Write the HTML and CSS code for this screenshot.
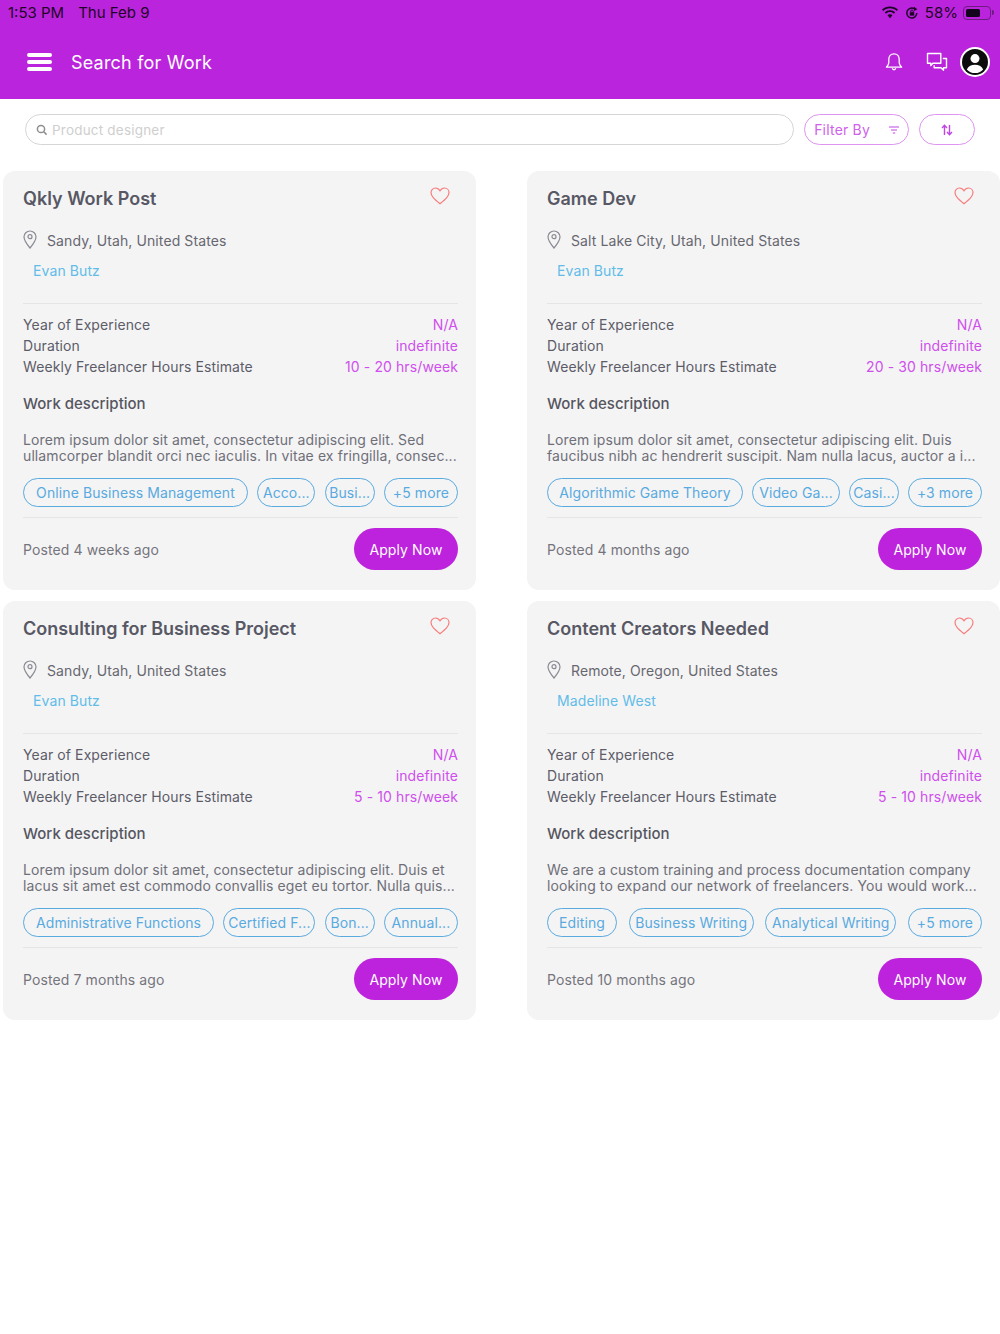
FILE: index.html
```html
<!DOCTYPE html>
<html lang="en">
<head>
<meta charset="utf-8">
<title>Search for Work</title>
<link rel="stylesheet" href="styles.css">
</head>
<body>
<header class="appbar">
  <div class="status">
    <div class="status-left"><span>1:53 PM</span><span>Thu Feb 9</span></div>
    <div class="status-right">
      <svg class="st-wifi" viewBox="0 0 18 13"><path d="M9 2.2c2.6 0 5 1 6.8 2.7l1.2-1.3C14.900 1.600 12.100.4 9 .4S3.100 1.600 1 3.600l1.200 1.300C4 3.200 6.400 2.200 9 2.200z"/><path d="M9 6.100c1.500 0 2.900.6 4 1.600l1.200-1.300C12.800 5.100 11 4.300 9 4.300s-3.800.8-5.200 2.100L5 7.700c1.100-1 2.500-1.600 4-1.600z"/><path d="M9 8.200c-1 0-1.800.4-2.500 1L9 12.300l2.500-3.100c-.7-.6-1.500-1-2.500-1z"/></svg>
      <svg class="st-lock" viewBox="0 0 14 14"><path d="M11.800 7A5 5 0 1 1 9.800 3" fill="none" stroke="#1d0426" stroke-width="1.500"/><path d="M9 .8l3.400 2.400L9 5z" fill="#1d0426"/><rect x="4.800" y="6.200" width="4.400" height="3.400" fill="#1d0426"/><path d="M5.800 6.500V5.200a1.200 1.200 0 0 1 2.400 0v1.300" fill="none" stroke="#1d0426"/></svg>
      <span class="st-pct">58%</span>
      <div class="battery"><div class="battery-fill"></div></div>
      <div class="battery-cap"></div>
    </div>
  </div>
  <div class="toolbar">
    <div class="burger"><i></i><i></i><i></i></div>
    <h1 class="page-title">Search for Work</h1>
    <svg class="bar-icon bell" viewBox="0 0 20 20"><path d="M10 1.800c-3.300 0-5.200 2.500-5.200 5.600v3.300c0 1.700-1.100 3.100-2.400 4.500h15.200c-1.300-1.400-2.400-2.800-2.400-4.500V7.400c0-3.100-1.900-5.600-5.200-5.600z" fill="none" stroke="#fff" stroke-width="1.300" stroke-linejoin="round"/><path d="M8.300 16.200c.2 1 .8 1.600 1.700 1.600s1.500-.6 1.700-1.600" fill="none" stroke="#fff" stroke-width="1.300"/></svg>
    <svg class="bar-icon chat" viewBox="0 0 22 20"><path d="M1.500 1.500h13.300v9.700H6.800l-2 2.400v-2.400H1.500z" fill="none" stroke="#fff" stroke-width="1.400" stroke-linejoin="round"/><path d="M16.800 6.500h3.700v9.300h-3v2.400l-2.500-2.400H8.200v-2.600" fill="none" stroke="#fff" stroke-width="1.400" stroke-linejoin="round"/></svg>
    <div class="avatar"><svg viewBox="0 0 26 26"><circle cx="13" cy="13" r="13" fill="#0c0c0c"/><circle cx="13" cy="9.600" r="4.500" fill="#fff"/><path d="M4.800 20.400c1.600-3.300 4.700-4.700 8.200-4.700s6.600 1.400 8.200 4.700a11 11 0 0 1-16.400 0z" fill="#fff"/></svg></div>
  </div>
</header>

<div class="searchrow">
  <div class="search">
    <svg class="search-icon" viewBox="0 0 12 12"><circle cx="5" cy="5" r="3.600" fill="none" stroke="#8d8d8d" stroke-width="1.500"/><path d="M7.800 7.800l2.800 2.800" stroke="#8d8d8d" stroke-width="1.500"/></svg>
    <span class="search-ph">Product designer</span>
  </div>
  <div class="filter">
    <span>Filter By</span>
    <svg class="filter-icon" viewBox="0 0 10 8"><path d="M0 1h10M2 4h6M3.800 7h2.400" stroke="#c046e4" stroke-width="1"/></svg>
  </div>
  <div class="sort">
    <svg viewBox="0 0 12 12"><path d="M3.500 11V1.500M1 4l2.500-2.700L6 4" fill="none" stroke="#c046e4" stroke-width="1.400"/><path d="M8.500 1v9.500M6 8l2.500 2.700L11 8" fill="none" stroke="#c046e4" stroke-width="1.400"/></svg>
  </div>
</div>

<main class="cards">

  <article class="card">
    <div class="card-head"><h2 class="card-title">Qkly Work Post</h2>
      <svg class="heart" viewBox="0 0 20 18"><path d="M10 16.800C4.500 12.300 1 9.400 1 5.600 1 3 3 1 5.400 1 7.200 1 9 2.100 10 3.800 11 2.100 12.800 1 14.600 1 17 1 19 3 19 5.600c0 3.800-3.500 6.700-9 11.200z" fill="none" stroke="#f87b7b" stroke-width="1.200"/></svg></div>
    <div class="loc"><svg class="pin" viewBox="0 0 14 19"><path d="M7 1C3.700 1 1 3.600 1 6.800 1 11 7 18 7 18s6-7 6-11.200C13 3.600 10.300 1 7 1z" fill="none" stroke="#8a8a92" stroke-width="1.200"/><circle cx="7" cy="6.700" r="2" fill="none" stroke="#8a8a92" stroke-width="1.200"/></svg><span>Sandy, Utah, United States</span></div>
    <div class="author">Evan Butz</div>
    <div class="facts">
      <div class="fact"><span>Year of Experience</span><span class="val">N/A</span></div>
      <div class="fact"><span>Duration</span><span class="val">indefinite</span></div>
      <div class="fact"><span>Weekly Freelancer Hours Estimate</span><span class="val">10 - 20 hrs/week</span></div>
    </div>
    <h3 class="desc-title">Work description</h3>
    <p class="desc"><span>Lorem ipsum dolor sit amet, consectetur adipiscing elit. Sed</span><span>ullamcorper blandit orci nec iaculis. In vitae ex fringilla, consec...</span></p>
    <div class="tags tags-a"><span class="tag">Online Business Management</span><span class="tag">Acco...</span><span class="tag">Busi...</span><span class="tag">+5 more</span></div>
    <div class="foot"><span class="posted">Posted 4 weeks ago</span><span class="apply">Apply Now</span></div>
  </article>

  <article class="card">
    <div class="card-head"><h2 class="card-title">Game Dev</h2>
      <svg class="heart" viewBox="0 0 20 18"><path d="M10 16.800C4.500 12.300 1 9.400 1 5.600 1 3 3 1 5.400 1 7.200 1 9 2.100 10 3.800 11 2.100 12.800 1 14.600 1 17 1 19 3 19 5.600c0 3.800-3.500 6.700-9 11.200z" fill="none" stroke="#f87b7b" stroke-width="1.200"/></svg></div>
    <div class="loc"><svg class="pin" viewBox="0 0 14 19"><path d="M7 1C3.700 1 1 3.600 1 6.800 1 11 7 18 7 18s6-7 6-11.200C13 3.600 10.300 1 7 1z" fill="none" stroke="#8a8a92" stroke-width="1.200"/><circle cx="7" cy="6.700" r="2" fill="none" stroke="#8a8a92" stroke-width="1.200"/></svg><span>Salt Lake City, Utah, United States</span></div>
    <div class="author">Evan Butz</div>
    <div class="facts">
      <div class="fact"><span>Year of Experience</span><span class="val">N/A</span></div>
      <div class="fact"><span>Duration</span><span class="val">indefinite</span></div>
      <div class="fact"><span>Weekly Freelancer Hours Estimate</span><span class="val">20 - 30 hrs/week</span></div>
    </div>
    <h3 class="desc-title">Work description</h3>
    <p class="desc"><span>Lorem ipsum dolor sit amet, consectetur adipiscing elit. Duis</span><span>faucibus nibh ac hendrerit suscipit. Nam nulla lacus, auctor a i...</span></p>
    <div class="tags tags-b"><span class="tag">Algorithmic Game Theory</span><span class="tag">Video Ga...</span><span class="tag">Casi...</span><span class="tag">+3 more</span></div>
    <div class="foot"><span class="posted">Posted 4 months ago</span><span class="apply">Apply Now</span></div>
  </article>

  <article class="card">
    <div class="card-head"><h2 class="card-title">Consulting for Business Project</h2>
      <svg class="heart" viewBox="0 0 20 18"><path d="M10 16.800C4.500 12.300 1 9.400 1 5.600 1 3 3 1 5.400 1 7.200 1 9 2.100 10 3.800 11 2.100 12.800 1 14.600 1 17 1 19 3 19 5.600c0 3.800-3.500 6.700-9 11.200z" fill="none" stroke="#f87b7b" stroke-width="1.200"/></svg></div>
    <div class="loc"><svg class="pin" viewBox="0 0 14 19"><path d="M7 1C3.700 1 1 3.600 1 6.800 1 11 7 18 7 18s6-7 6-11.200C13 3.600 10.300 1 7 1z" fill="none" stroke="#8a8a92" stroke-width="1.200"/><circle cx="7" cy="6.700" r="2" fill="none" stroke="#8a8a92" stroke-width="1.200"/></svg><span>Sandy, Utah, United States</span></div>
    <div class="author">Evan Butz</div>
    <div class="facts">
      <div class="fact"><span>Year of Experience</span><span class="val">N/A</span></div>
      <div class="fact"><span>Duration</span><span class="val">indefinite</span></div>
      <div class="fact"><span>Weekly Freelancer Hours Estimate</span><span class="val">5 - 10 hrs/week</span></div>
    </div>
    <h3 class="desc-title">Work description</h3>
    <p class="desc"><span>Lorem ipsum dolor sit amet, consectetur adipiscing elit. Duis et</span><span>lacus sit amet est commodo convallis eget eu tortor. Nulla quis...</span></p>
    <div class="tags tags-c"><span class="tag">Administrative Functions</span><span class="tag">Certified F...</span><span class="tag">Bon...</span><span class="tag">Annual...</span></div>
    <div class="foot"><span class="posted">Posted 7 months ago</span><span class="apply">Apply Now</span></div>
  </article>

  <article class="card">
    <div class="card-head"><h2 class="card-title">Content Creators Needed</h2>
      <svg class="heart" viewBox="0 0 20 18"><path d="M10 16.800C4.500 12.300 1 9.400 1 5.600 1 3 3 1 5.400 1 7.200 1 9 2.100 10 3.800 11 2.100 12.800 1 14.600 1 17 1 19 3 19 5.600c0 3.800-3.500 6.700-9 11.200z" fill="none" stroke="#f87b7b" stroke-width="1.200"/></svg></div>
    <div class="loc"><svg class="pin" viewBox="0 0 14 19"><path d="M7 1C3.700 1 1 3.600 1 6.800 1 11 7 18 7 18s6-7 6-11.200C13 3.600 10.300 1 7 1z" fill="none" stroke="#8a8a92" stroke-width="1.200"/><circle cx="7" cy="6.700" r="2" fill="none" stroke="#8a8a92" stroke-width="1.200"/></svg><span>Remote, Oregon, United States</span></div>
    <div class="author">Madeline West</div>
    <div class="facts">
      <div class="fact"><span>Year of Experience</span><span class="val">N/A</span></div>
      <div class="fact"><span>Duration</span><span class="val">indefinite</span></div>
      <div class="fact"><span>Weekly Freelancer Hours Estimate</span><span class="val">5 - 10 hrs/week</span></div>
    </div>
    <h3 class="desc-title">Work description</h3>
    <p class="desc"><span>We are a custom training and process documentation company</span><span>looking to expand our network of freelancers. You would work...</span></p>
    <div class="tags tags-d"><span class="tag">Editing</span><span class="tag">Business Writing</span><span class="tag">Analytical Writing</span><span class="tag">+5 more</span></div>
    <div class="foot"><span class="posted">Posted 10 months ago</span><span class="apply">Apply Now</span></div>
  </article>

</main>
</body>
</html>
```
FILE: styles.css
```css
* { box-sizing: border-box; }
html, body { margin: 0; padding: 0; }
body {
  width: 1000px;
  height: 1334px;
  background: #fff;
  font-family: Inter, "Open Sans", sans-serif;
  color: #5c5c68;
  overflow: hidden;
}
.appbar {
  height: 99px;
  background: #bb24dd;
  display: flex;
  flex-direction: column;
}
.status {
  height: 25px;
  padding: 0 6px 0 8px;
  display: flex;
  justify-content: space-between;
  align-items: center;
  font-family: Inter, sans-serif;
  font-size: 15px;
  color: #1d0426;
}
.status-left { display: flex; gap: 14px; }
.status-right { display: flex; align-items: center; }
.st-wifi { width: 18px; height: 13px; fill: #1d0426; margin-right: 6px; }
.st-lock { width: 14px; height: 14px; margin-right: 6px; }
.st-pct { margin-right: 5px; font-size: 15px; }
.battery {
  width: 28px;
  height: 14px;
  border: 1px solid #6d1a82;
  border-radius: 4px;
  padding: 2px;
}
.battery-fill { width: 14px; height: 100%; background: #14031c; border-radius: 1.500px; }
.battery-cap { width: 2px; height: 5px; background: #6d1a82; margin-left: 1px; border-radius: 0 2px 2px 0; }
.toolbar {
  flex: 1;
  display: flex;
  align-items: center;
  padding: 0 10px 0 27px;
  margin-top: 0;
}
.burger { width: 25px; display: flex; flex-direction: column; gap: 3.500px; margin-right: 19px; }
.burger i { display: block; height: 3.500px; background: #fff; border-radius: 2px; }
.page-title {
  margin: 0;
  font-size: 18px;
  font-weight: 400;
  color: #fff;
  letter-spacing: 0.2px;
  flex: 1;
}
.bar-icon { flex: none; }
.bell { width: 20px; height: 20px; margin-right: 22px; }
.chat { width: 22px; height: 20px; margin-right: 12px; }
.avatar { width: 30px; height: 30px; border-radius: 50%; background: #fff; padding: 2px; display: flex; }
.avatar svg { width: 26px; height: 26px; }

.searchrow {
  display: flex;
  align-items: center;
  padding: 15px 25px 0 25px;
  height: 72px;
  align-items: flex-start;
}
.search {
  width: 770px;
  height: 31px;
  border: 1px solid #d6d6d6;
  border-bottom-width: 1.500px;
  border-radius: 16px;
  display: flex;
  align-items: center;
  padding-left: 10px;
  margin-right: 10px;
}
.search-icon { width: 12px; height: 12px; margin-right: 4px; }
.search-ph { font-size: 13.500px; color: #cfcfcf; letter-spacing: 0.2px; }
.filter {
  width: 105px;
  height: 31px;
  border: 1px solid #de94f0;
  border-radius: 16px;
  display: flex;
  align-items: center;
  justify-content: space-between;
  padding: 0 9px;
  font-size: 14px;
  color: #cf62ea;
  margin-right: 10px;
  letter-spacing: 0.2px;
}
.filter-icon { width: 10px; height: 8px; }
.sort {
  width: 56px;
  height: 31px;
  border: 1px solid #de94f0;
  border-radius: 16px;
  display: flex;
  align-items: center;
  justify-content: center;
}
.sort svg { width: 12px; height: 12px; }

.cards {
  display: grid;
  grid-template-columns: 473px 473px;
  column-gap: 51px;
  row-gap: 11px;
  padding-left: 3px;
}
.card {
  height: 419px;
  background: #f4f4f5;
  border-radius: 12px;
  padding: 0 18px 0 20px;
  display: flex;
  flex-direction: column;
}
.card-head {
  height: 54px;
  display: flex;
  justify-content: space-between;
  align-items: flex-start;
  padding-top: 16px;
}
.card-title { margin: 0; font-size: 18px; font-weight: 600; color: #585864; line-height: 23px; }
.heart { width: 20px; height: 18px; margin: 0 8px 0 0; flex: none; }
.loc { display: flex; align-items: center; height: 30px; font-size: 14px; color: #67676f; }
.pin { width: 14px; height: 19px; margin-right: 10px; flex: none; margin-top: -2px; }
.loc span { letter-spacing: 0.1px; }
.author { font-size: 14px; color: #62bce8; padding-left: 10px; line-height: 20px; margin-top: 6px; letter-spacing: 0.1px; }
.facts { margin-top: 22px; border-top: 1px solid #e5e5e6; padding-top: 10px; }
.fact { display: flex; justify-content: space-between; font-size: 14px; line-height: 21px; color: #5c5c68; letter-spacing: 0.1px; }
.val { color: #cf4fec; }
.desc-title { margin: 17px 0 0; font-size: 15px; font-weight: 500; line-height: 20px; color: #565660; }
.desc { margin: 18px 0 0; font-size: 14px; line-height: 16px; color: #6f6f78; }
.desc span { display: block; white-space: nowrap; letter-spacing: 0.1px; }
.tags { display: flex; justify-content: space-between; margin-top: 14px; }
.tag {
  height: 29px;
  border: 1.200px solid #59aadf;
  border-radius: 15px;
  display: flex;
  align-items: center;
  justify-content: center;
  font-size: 14px;
  color: #59aadf;
  white-space: nowrap;
  letter-spacing: 0.1px;
}
.tags-a .tag:nth-child(1) { width: 225px; }
.tags-a .tag:nth-child(2) { width: 58px; }
.tags-a .tag:nth-child(3) { width: 50px; }
.tags-a .tag:nth-child(4) { width: 74px; }
.tags-b .tag:nth-child(1) { width: 196px; }
.tags-b .tag:nth-child(2) { width: 88px; }
.tags-b .tag:nth-child(3) { width: 50px; }
.tags-b .tag:nth-child(4) { width: 74px; }
.tags-c .tag:nth-child(1) { width: 191px; }
.tags-c .tag:nth-child(2) { width: 92px; }
.tags-c .tag:nth-child(3) { width: 50px; }
.tags-c .tag:nth-child(4) { width: 74px; }
.tags-d .tag:nth-child(1) { width: 70px; }
.tags-d .tag:nth-child(2) { width: 125px; }
.tags-d .tag:nth-child(3) { width: 131px; }
.tags-d .tag:nth-child(4) { width: 74px; }
.foot {
  margin-top: 10px;
  border-top: 1px solid #e5e5e6;
  padding-top: 10px;
  display: flex;
  justify-content: space-between;
  align-items: center;
}
.posted { font-size: 14px; color: #74747c; letter-spacing: 0.1px; }
.apply {
  width: 104px;
  height: 42px;
  border-radius: 21px;
  background: #bd22dc;
  color: #fff;
  font-size: 14px;
  display: flex;
  align-items: center;
  justify-content: center;
  letter-spacing: 0.1px;
}
```
